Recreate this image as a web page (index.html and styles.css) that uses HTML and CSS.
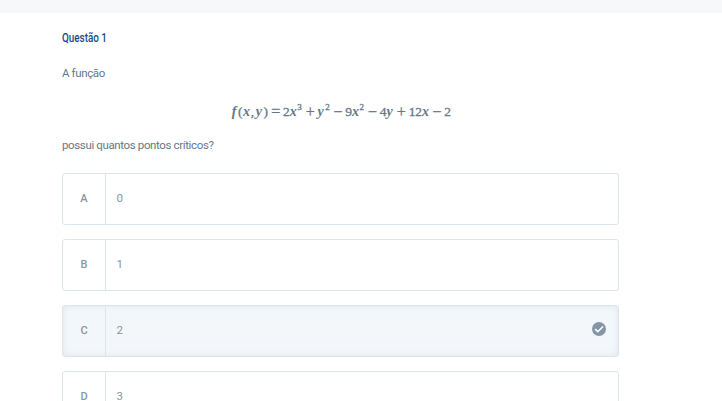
FILE: index.html
```html
<!DOCTYPE html>
<html lang="pt-BR">
<head>
  <meta charset="UTF-8">
  <title>Questão 1</title>
  <link rel="stylesheet" href="styles.css">
</head>
<body>
  <div class="topbar"></div>
  <main class="question">
    <h2>Questão 1</h2>
    <p class="intro">A função</p>
    <div class="formula"><i class="fn">f</i><span class="paren">(</span><i>x</i><span class="comma">,</span><i>y</i><span class="paren">)</span><span class="op">=</span><b>2</b><i>x</i><sup>3</sup><span class="op">+</span><i>y</i><sup>2</sup><span class="op">−</span><b>9</b><i>x</i><sup>2</sup><span class="op">−</span><b>4</b><i>y</i><span class="op">+</span><b>1</b><b>2</b><i>x</i><span class="op">−</span><b>2</b></div>
    <p class="ask">possui quantos pontos críticos?</p>

    <div class="options">
      <div class="option">
        <div class="letter">A</div>
        <div class="answer">0</div>
      </div>
      <div class="option">
        <div class="letter">B</div>
        <div class="answer">1</div>
      </div>
      <div class="option selected">
        <div class="letter">C</div>
        <div class="answer">2</div>
        <svg class="check" viewBox="0 0 14 14">
          <circle cx="7" cy="7" r="7" fill="#8496a5"/>
          <path d="M3.2 7.2 L5.8 9.7 L11 4.5" fill="none" stroke="#fff" stroke-width="1.6"/>
        </svg>
      </div>
      <div class="option">
        <div class="letter">D</div>
        <div class="answer">3</div>
      </div>
    </div>
  </main>
</body>
</html>
```

FILE: styles.css
```css
body {
  margin: 0;
  height: 401px;
  overflow: hidden;
  background: #fff;
  color: #657786;
  font-family: Roboto, "Liberation Sans", sans-serif;
  font-size: 11px;
}
.topbar {
  height: 13px;
  background: #f6f8fa;
}
.question {
  width: 557px;
  margin-left: 62px;
  padding-top: 17px;
}
h2 {
  margin: 0;
  color: #174a86;
  font-size: 13px;
  font-weight: 500;
  line-height: 16px;
  transform: scaleX(0.76);
  transform-origin: left;
}
p {
  margin: 0;
  font-size: 11.5px;
  letter-spacing: -0.37px;
  line-height: 16px;
}
.intro {
  margin-top: 19px;
}
.ask {
  margin-top: 15px;
}
/* Equation */
.formula {
  display: flex;
  justify-content: center;
  height: 20px;
  margin-top: 21px;
  font-family: "Liberation Serif", serif;
  font-size: 13.5px;
  line-height: 20px;
  -webkit-text-stroke: 0.3px #657786;
}
.formula i {
  width: 7.7px;
  font-size: 14px;
  font-weight: bold;
  -webkit-text-stroke: 0;
}
.formula .fn {
  width: 8px;
  text-align: center;
}
.formula b {
  width: 6.7px;
  font-weight: normal;
}
.formula sup {
  width: 5.5px;
  font-size: 9px;
  line-height: 11px;
}
.formula .paren {
  width: 5px;
}
.formula .comma {
  width: 5px;
}
.formula .op {
  width: 10px;
  margin: 0 2.3px;
  text-align: center;
  font-size: 16px;
}
/* Answer choices */
.options {
  display: flex;
  flex-direction: column;
  gap: 14px;
  margin-top: 20px;
}
.option {
  display: flex;
  align-items: center;
  box-sizing: border-box;
  height: 52px;
  border: 1px solid #dce5ec;
  border-radius: 3px;
  color: #8496a5;
}
.letter {
  width: 42px;
  border-right: 1px solid #dce5ec;
  font-weight: 500;
  line-height: 50px;
  text-align: center;
}
.answer {
  flex: 1;
  padding-left: 10.5px;
  padding-bottom: 2px;
  font-size: 11.5px;
}
.selected {
  background: #f3f7fa;
  box-shadow: inset 0 0 6px #dce5ec;
}
.check {
  width: 14px;
  height: 14px;
  margin-right: 12px;
  margin-bottom: 4px;
}
```
